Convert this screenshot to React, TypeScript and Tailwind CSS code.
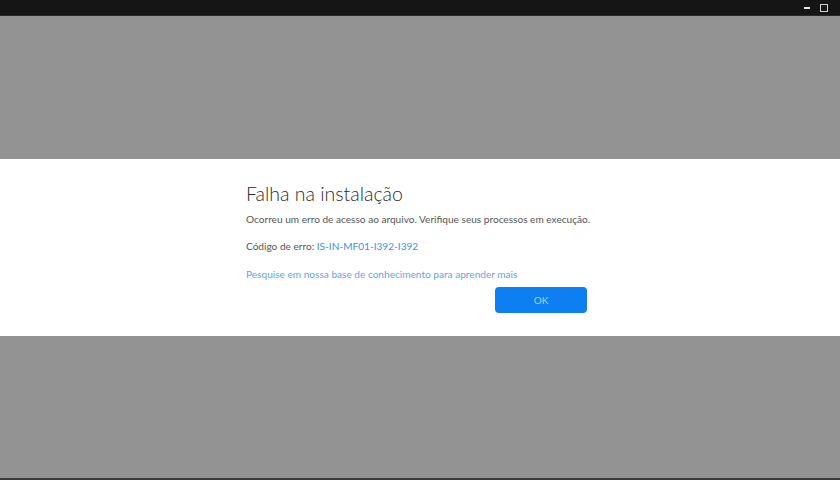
export default function App() {
  return (
    <div className="flex h-[480px] w-[840px] flex-col bg-[#939393] font-['Lato',sans-serif]">
      {/* window title bar */}
      <div className="flex h-[16px] items-center justify-end gap-[10px] bg-[#151515] pr-[12px] border-b border-[#2a2a2a]">
        <div className="h-[2px] w-[6px] bg-[#e6e6e6]" />
        <div className="h-[8px] w-[8px] border border-[#d0d0d0]" />
      </div>

      <div className="h-[143px]" />

      {/* error dialog band */}
      <div className="flex h-[177px] bg-white">
        <div className="ml-[246px] w-[341px] pt-[22px]">
          <h1 className="text-[19.5px] font-light leading-[26px] text-[#2a2a2a]">Falha na instalação</h1>
          <p className="mt-[5px] whitespace-nowrap text-[10.1px] leading-[14px] text-[#555]">
            Ocorreu um erro de acesso ao arquivo. Verifique seus processos em execução.
          </p>
          <p className="mt-[13px] text-[10.1px] leading-[14px] text-[#555]">
            Código de erro: <span className="text-[#4590e0]">IS-IN-MF01-I392-I392</span>
          </p>
          <p className="mt-[14px] text-[10.1px] leading-[14px] text-[#62a4e8]">
            Pesquise em nossa base de conhecimento para aprender mais
          </p>
          <div className="mt-[6px] flex justify-end">
            <button className="flex h-[26px] w-[92px] items-center justify-center rounded-[4px] bg-[#0d7ff2] text-[10px] text-[#a6d4ff]">
              OK
            </button>
          </div>
        </div>
      </div>

      <div className="flex-1" />
      <div className="h-[2px] bg-[#3a3a3a]" />
    </div>
  );
}
